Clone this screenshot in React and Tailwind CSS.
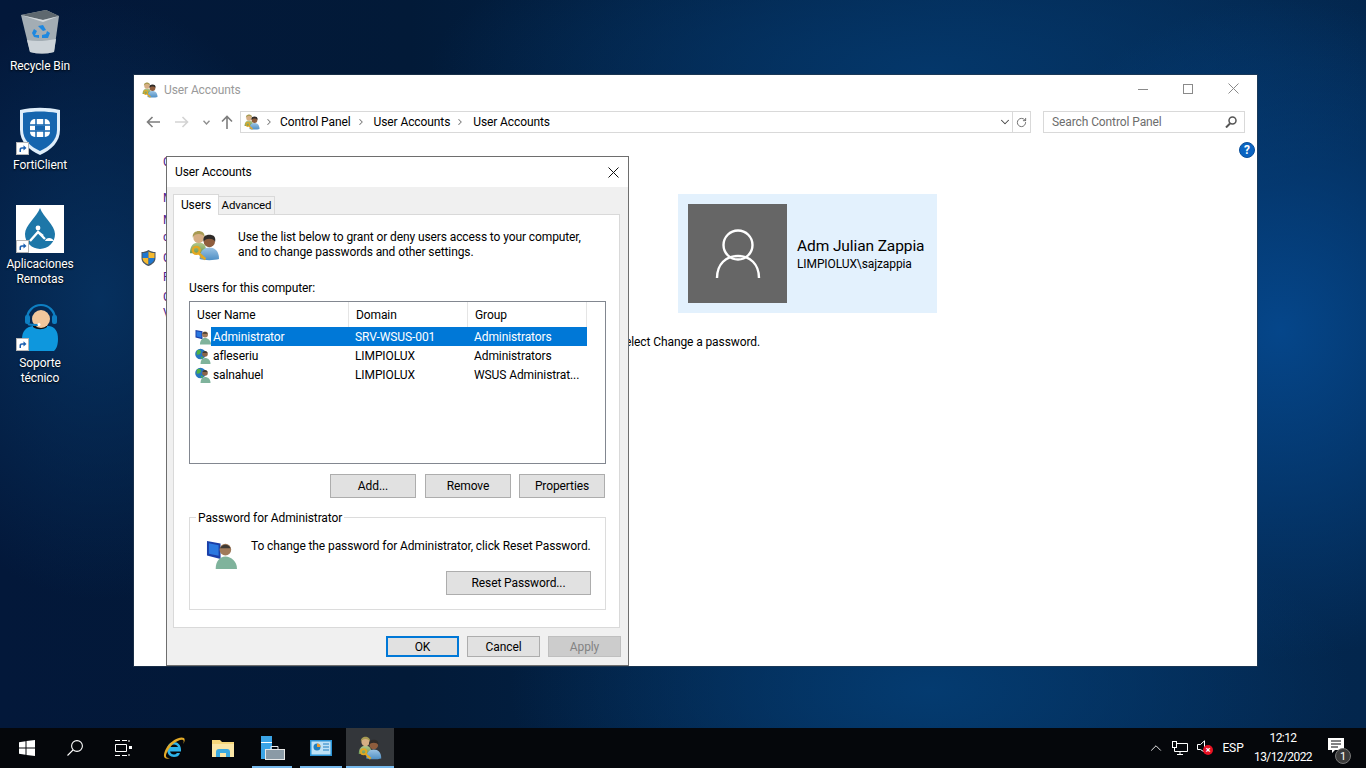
import React from "react";
import { ChevronDown, ChevronRight, ChevronUp, RotateCw } from "lucide-react";

const font = "font-['Roboto','Noto_Sans',sans-serif]";

const UsersIcon = ({ size = 16 }) => (
  <svg width={size} height={size} viewBox="0 0 32 32" className="shrink-0">
    <defs>
      <linearGradient id="shirtA" x1="0" y1="0" x2="0" y2="1">
        <stop offset="0" stopColor="#b4c88c" />
        <stop offset="1" stopColor="#6f9a58" />
      </linearGradient>
      <linearGradient id="shirtB" x1="0" y1="0" x2="0" y2="1">
        <stop offset="0" stopColor="#9cc4e4" />
        <stop offset="1" stopColor="#4f8fc4" />
      </linearGradient>
    </defs>
    <path d="M1 24c0-7 3-11 9-11s8 4 8 11z" fill="url(#shirtA)" />
    <circle cx="10" cy="8" r="5.500" fill="#d6ae84" />
    <path d="M4 8c-1-5 3-7 6-7s7 2 6 7c-1-3-3-4-6-4S5 5 4 8z" fill="#a79a52" />
    <path d="M11 30c0-8 4-12 10-12s10 4 10 12c-5 1.500-15 1.500-20 0z" fill="url(#shirtB)" />
    <circle cx="21" cy="12" r="5.800" fill="#8f5d3d" />
    <path d="M15 12c-1-5 2-7 6-7s7 2 6 7c-1-2-3-3-6-3s-5 1-6 3z" fill="#2f2b28" />
    <circle cx="7.500" cy="21" r="3.600" fill="none" stroke="#e3a822" strokeWidth="2.400" />
    <path d="M10 24l7 6M14 27l-1.500 2M16.500 29l-1.500 1.500" stroke="#e3a822" strokeWidth="2.400" />
  </svg>
);

const DomainUser = () => (
  <svg width="16" height="16" viewBox="0 0 16 16" className="shrink-0">
    <circle cx="5.500" cy="6" r="5.300" fill="#2676c0" />
    <path d="M2 2.500c2-1.500 4-.5 4 1.500S3.500 7 1.500 6.500zM5.500 8.500l3 .5-2 2.300z" fill="#4fb048" />
    <circle cx="10" cy="6" r="2.800" fill="#8b6548" />
    <path d="M7.500 5a2.600 2.600 0 0 1 5 0z" fill="#3e3a34" />
    <path d="M5.500 16c0-4 1.500-6 4.500-6s5.500 2 5.500 6z" fill="#7fb39c" />
  </svg>
);

const LocalUser = ({ size = 16 }) => (
  <svg width={size} height={size} viewBox="0 0 16 16" className="shrink-0">
    <path d="M.5 1l7 1.300v8L.5 8.500z" fill="#1a3fa8" />
    <path d="M1.500 2.200l5 1v5.500l-5-1.100z" fill="#2a78e0" />
    <circle cx="10" cy="5.500" r="3" fill="#a07a5a" />
    <path d="M7.300 4.800a2.900 2.900 0 0 1 5.400 0z" fill="#3e3a34" />
    <path d="M5 15.500c0-4 2-6.500 5-6.500s6 2.500 6 6.500z" fill="#7fb39c" />
  </svg>
);

const DialogButton = ({ className = "", children }) => (
  <div className={`flex items-center justify-center h-6 bg-[#e1e1e1] border border-[#adadad] text-[12px] text-black ${className}`}>
    {children}
  </div>
);

const ShortcutArrow = () => (
  <div className="absolute left-0 bottom-0 w-[13px] h-[13px] bg-white border border-[#b5b5b5] flex items-center justify-center">
    <svg width="9" height="9" viewBox="0 0 9 9">
      <path d="M1.500 8V5.500C1.500 4 2.500 3.200 4 3.200h1.500V1.200L8.500 4 5.500 6.600V4.800H4.300C3.300 4.800 3 5.400 3 6.200V8z" fill="#1b5fb0" />
    </svg>
  </div>
);

const DesktopIcon = ({ top, lines, labelClass = "mt-[3px]", children }) => (
  <div className="absolute left-0 w-[80px] flex flex-col items-center" style={{ top }}>
    <div className="relative w-12 h-12">{children}</div>
    <div className={`${labelClass} text-white text-[12px] leading-[15px] text-center [text-shadow:0_1px_2px_#000]`}>
      {lines.map((l) => (
        <div key={l}>{l}</div>
      ))}
    </div>
  </div>
);

const UserRow = ({ icon, name, domain, group, selected }) => (
  <div className="flex items-center h-[19px] pl-[5px]">
    {icon}
    <div className={`flex items-center h-[19px] w-[376px] ${selected ? "bg-[#0078d7] text-white" : "text-black"}`}>
      <div className="w-[144px] pl-[2px]">{name}</div>
      <div className="w-[119px]">{domain}</div>
      <div className="whitespace-nowrap">{group}</div>
    </div>
  </div>
);

const HeaderCell = ({ className = "", children }) => (
  <div className={`h-[25px] flex items-center border-r border-[#e5e5e5] pl-[7px] ${className}`}>{children}</div>
);

const TaskButton = ({ className = "", underline, children }) => (
  <div className={`relative flex items-center justify-center h-full ${className}`}>
    {children}
    {underline && <div className="absolute left-[4px] right-[4px] bottom-0 h-[2px] bg-[#76b9ed]" />}
  </div>
);

const hiddenLinks = [
  { top: 80, label: "C" },
  { top: 116, label: "M" },
  { top: 138, label: "M" },
  { top: 155, label: "c" },
  { top: 176, label: "C" },
  { top: 195, label: "P" },
  { top: 215, label: "C" },
  { top: 231, label: "V" },
];

const App = () => {
  return (
    <div className={`relative w-[1366px] h-[768px] overflow-hidden ${font} text-[12px] tracking-[-0.1px] bg-[radial-gradient(ellipse_300px_330px_at_1280px_330px,#05468a_0%,rgba(5,70,138,0)_100%),radial-gradient(ellipse_420px_200px_at_930px_690px,#043b70_0%,rgba(4,59,112,0)_100%),radial-gradient(ellipse_500px_160px_at_930px_70px,#04376a_0%,rgba(4,55,106,0)_100%),radial-gradient(ellipse_220px_300px_at_100px_300px,#06305e_0%,rgba(6,48,94,0)_100%),linear-gradient(90deg,#03183a_0%,#021a38_30%,#032a54_70%,#03264d_100%)]`}>
      {/* desktop icons */}
      <DesktopIcon top={8} lines={["Recycle Bin"]}>
        <svg width="48" height="48" viewBox="0 0 48 48">
          <path d="M5 7L30 2l13 6-5 36c-8 2-16 2-24 0z" fill="#a3adb4" />
          <path d="M5 7L30 2l13 6-16 4z" fill="#5e686f" />
          <path d="M5 7l22 5 16-4-16 6z" fill="#d5dadd" />
          <path d="M11 32c9 2 19 1 29-1l-2 13c-8 2-16 2-24 0z" fill="#ccd3d8" />
          <path d="M22 18l5-1 3 5-3 1zM16 25l2-4 3 2-2 4 4 0v3l-5-1zM26 30v-3l4-1 1-3 3 2-2 5z" fill="#1e88e0" />
        </svg>
      </DesktopIcon>
      <DesktopIcon top={107} lines={["FortiClient"]}>
        <svg width="48" height="48" viewBox="0 0 48 48">
          <path d="M4 3c13-3 27-3 40 0v20c0 12-9 20-20 25C13 43 4 35 4 23z" fill="#dfeefa" />
          <path d="M7 6c11-2 23-2 34 0v17c0 10-8 17-17 21C15 40 7 33 7 23z" fill="#1565ae" />
          <rect x="14" y="12" width="20" height="18" rx="5" fill="#fff" />
          <path d="M14 18h20M14 24h20M20 12v6M28 12v6M20 24v6M28 24v6" stroke="#1565ae" strokeWidth="1.500" />
          <rect x="19" y="18.500" width="10" height="5" fill="#1565ae" />
        </svg>
        <ShortcutArrow />
      </DesktopIcon>
      <DesktopIcon top={205} lines={["Aplicaciones", "Remotas"]} labelClass="mt-[4px]">
        <div className="w-12 h-12 bg-white">
          <svg width="48" height="48" viewBox="0 0 48 48">
            <path d="M24 3c3 9 15 17 15 26a15 15 0 0 1-30 0C9 20 21 12 24 3z" fill="#1d77a8" />
            <circle cx="22" cy="23" r="2.400" fill="#fff" />
            <path d="M14 36l8-9 7 7M22 27l5 4" stroke="#fff" strokeWidth="2.400" fill="none" />
            <path d="M29 36c1-4 7-4 9 0z" fill="#fff" />
          </svg>
        </div>
        <ShortcutArrow />
      </DesktopIcon>
      <DesktopIcon top={303} lines={["Soporte", "técnico"]} labelClass="mt-[5px]">
        <svg width="48" height="48" viewBox="0 0 48 48">
          <path d="M13 49C8 49 6 42 6 36c0-8 4-12 11-13h16c6 1 9 5 9 13 0 6-2 13-7 13z" fill="#0e97dd" />
          <path d="M17 24c4 3 10 3 14 0v-2H17z" fill="#111" />
          <circle cx="25" cy="16" r="9" fill="#f2c79c" />
          <path d="M11 16a14 14 0 0 1 28 0" fill="none" stroke="#0e7fc2" strokeWidth="2.200" />
          <rect x="9" y="12" width="5" height="9" rx="2" fill="#0e7fc2" />
          <rect x="36" y="12" width="5" height="9" rx="2" fill="#0e7fc2" />
          <path d="M12 21c2 1 6 1 10 1" fill="none" stroke="#0e7fc2" strokeWidth="2" />
          <circle cx="23" cy="21.500" r="1.500" fill="#fff" />
        </svg>
        <ShortcutArrow />
      </DesktopIcon>

      {/* control panel window */}
      <div className="absolute left-[134px] top-[75px] w-[1123px] h-[591px] bg-white shadow-[0_0_0_1px_rgba(40,60,80,0.6)]">
        <div className="flex items-center h-[30px] pl-[8px]">
          <UsersIcon />
          <span className="ml-[6px] text-[#9a9a9a]">User Accounts</span>
          <div className="absolute right-[18px] top-[8px] flex items-center gap-[35px]">
            <svg width="10" height="10" viewBox="0 0 10 10" stroke="#8a8a8a" fill="none"><path d="M0 5.500h10" /></svg>
            <svg width="10" height="10" viewBox="0 0 10 10" stroke="#8a8a8a" fill="none"><rect x=".5" y=".5" width="9" height="9" /></svg>
            <svg width="11" height="11" viewBox="0 0 11 11" stroke="#8a8a8a" fill="none"><path d="M.5.500l10 10M10.500.5l-10 10" /></svg>
          </div>
        </div>
        <div className="flex items-center h-[22px] mt-[6px]">
          <svg width="14" height="12" viewBox="0 0 14 12" fill="none" stroke="#7d7d7d" strokeWidth="1.600" className="ml-[12px]"><path d="M14 6H1.500M6.500 1L1.500 6l5 5" /></svg>
          <svg width="14" height="12" viewBox="0 0 14 12" fill="none" stroke="#d3d3d3" strokeWidth="1.600" className="ml-[15px]"><path d="M0 6h12.500M7.500 1l5 5-5 5" /></svg>
          <svg width="7" height="5" viewBox="0 0 7 5" fill="none" stroke="#8f8f8f" strokeWidth="1.400" className="ml-[14px]"><path d="M.5.800L3.500 4l3-3.200" /></svg>
          <svg width="12" height="14" viewBox="0 0 12 14" fill="none" stroke="#7d7d7d" strokeWidth="1.600" className="ml-[11px]"><path d="M6 14V1.500M1 6.500l5-5 5 5" /></svg>
          <div className="ml-[7px] flex items-center w-[791px] h-[22px] border border-[#d9d9d9]">
            <div className="ml-[3px]"><UsersIcon /></div>
            <ChevronRight size={10} strokeWidth={2.500} className="ml-[4px] text-[#777]" />
            <span className="ml-[6px]">Control Panel</span>
            <ChevronRight size={10} strokeWidth={2.500} className="ml-[5px] text-[#777]" />
            <span className="ml-[8px]">User Accounts</span>
            <ChevronRight size={10} strokeWidth={2.500} className="ml-[5px] text-[#777]" />
            <span className="ml-[8px]">User Accounts</span>
            <ChevronDown size={14} strokeWidth={1.800} className="ml-auto mr-[-1px] text-[#444]" />
            <div className="flex items-center justify-center w-[18px] h-full border-l border-[#d9d9d9] ml-[1px]">
              <RotateCw size={11} strokeWidth={2} className="text-[#666]" />
            </div>
          </div>
          <div className="ml-[12px] flex items-center w-[202px] h-[22px] border border-[#d9d9d9] pl-[8px] text-[#6d6d6d]">
            Search Control Panel
            <svg width="12" height="12" viewBox="0 0 12 12" fill="none" stroke="#555" className="ml-auto mr-[7px]">
              <circle cx="7.500" cy="4.500" r="3.500" strokeWidth="1.500" />
              <path d="M5 7.500L1 11.500" strokeWidth="2" />
            </svg>
          </div>
        </div>
        {/* help */}
        <div className="absolute left-[1105px] top-[67px] w-4 h-4 rounded-full bg-[#0a64c2] border border-[#0a4f9a] flex items-center justify-center text-white text-[12px] font-bold leading-none">?</div>
        {/* links cut off behind the dialog */}
        {hiddenLinks.map((link) => (
          <div key={link.top} className="absolute left-[29px] leading-[15px] text-[#4b1a8b]" style={{ top: link.top }}>
            {link.label}
          </div>
        ))}
        <div className="absolute left-[7px] top-[175px]">
          <svg width="15" height="16" viewBox="0 0 15 16">
            <path d="M7.500 0C10 1.500 12 2 14.500 2v6c0 4-3 6.500-7 8-4-1.500-7-4-7-8V2C3 2 5 1.500 7.500 0z" fill="#4a5560" />
            <path d="M7.500 1.500V8H1.500V3c2.500 0 4-.5 6-1.500z" fill="#1f78d1" />
            <path d="M7.500 1.500c2 1 3.500 1.500 6 1.500v5h-6z" fill="#f5b92f" />
            <path d="M1.500 8h6v6.500C4 13.500 1.700 11 1.500 8z" fill="#f5b92f" />
            <path d="M7.500 8h6c-.2 3-2.500 5.500-6 6.500z" fill="#1f78d1" />
          </svg>
        </div>
        {/* user card */}
        <div className="absolute left-[544px] top-[119px] flex items-center w-[259px] h-[119px] bg-[#e3f1fd] pl-[10px]">
          <div className="flex items-center justify-center w-[99px] h-[99px] bg-[#666666]">
            <svg width="46" height="50" viewBox="0 0 46 50" fill="none" stroke="#fff" strokeWidth="2.400">
              <circle cx="23" cy="16" r="14.500" />
              <path d="M2 49c0-14 9-22 21-22s21 8 21 22" />
            </svg>
          </div>
          <div className="ml-[10px]">
            <div className="text-[15.5px] leading-[21px] text-black">Adm Julian Zappia</div>
            <div className="text-[12px] leading-[15px] text-black">LIMPIOLUX\sajzappia</div>
          </div>
        </div>
        <div className="absolute left-[491px] top-[258px] text-black">elect Change a password.</div>
      </div>

      {/* dialog */}
      <div className="absolute left-[166px] top-[156px] w-[463px] h-[510px] bg-[#f0f0f0] border border-[#6e6e6e] flex flex-col">
        <div className="flex items-center h-[30px] bg-white pl-[8px] text-black">
          User Accounts
          <svg width="11" height="11" viewBox="0 0 11 11" stroke="#111" fill="none" className="ml-auto mr-[9px]"><path d="M.5.500l10 10M10.500.5l-10 10" /></svg>
        </div>
        <div className="flex items-end h-[27px] pl-[6px]">
          <div className="flex items-center justify-center w-[46px] h-[21px] bg-white border border-b-0 border-[#d9d9d9] relative top-[1px] z-10">Users</div>
          <div className="flex items-center justify-center w-[56px] h-[18px] bg-[#f0f0f0] border border-l-0 border-b-0 border-[#d9d9d9] text-[11.5px]">Advanced</div>
        </div>
        <div className="ml-[6px] w-[447px] h-[414px] bg-white border border-[#d9d9d9] pl-[15px]">
          <div className="flex pt-[15px] h-[66px]">
            <UsersIcon size={31} />
            <div className="ml-[18px] leading-[15px] text-black whitespace-nowrap">
              <div>Use the list below to grant or deny users access to your computer,</div>
              <div>and to change passwords and other settings.</div>
            </div>
          </div>
          <div className="text-black leading-[15px]">Users for this computer:</div>
          <div className="mt-[5px] w-[417px] h-[163px] border border-[#828790] bg-white">
            <div className="flex text-black">
              <HeaderCell className="w-[159px]">User Name</HeaderCell>
              <HeaderCell className="w-[119px]">Domain</HeaderCell>
              <HeaderCell className="w-[119px]">Group</HeaderCell>
            </div>
            <UserRow icon={<LocalUser />} name="Administrator" domain="SRV-WSUS-001" group="Administrators" selected />
            <UserRow icon={<DomainUser />} name="afleseriu" domain="LIMPIOLUX" group="Administrators" />
            <UserRow icon={<DomainUser />} name="salnahuel" domain="LIMPIOLUX" group="WSUS Administrat..." />
          </div>
          <div className="flex mt-[10px] pl-[141px]">
            <DialogButton className="w-[86px]">Add...</DialogButton>
            <DialogButton className="w-[86px] ml-[9px]">Remove</DialogButton>
            <DialogButton className="w-[86px] ml-[8px]">Properties</DialogButton>
          </div>
          <div className="relative mt-[19px] w-[417px] h-[93px] border border-[#dcdcdc]">
            <div className="absolute left-[6px] -top-[7px] bg-white px-[2px] leading-[15px] text-black">Password for Administrator</div>
            <div className="flex pt-[21px] pl-[16px]">
              <LocalUser size={31} />
              <div className="ml-[14px] leading-[15px] text-black whitespace-nowrap">To change the password for Administrator, click Reset Password.</div>
            </div>
            <DialogButton className="absolute left-[256px] top-[53px] w-[145px]">Reset Password...</DialogButton>
          </div>
        </div>
        <div className="flex mt-[8px] pl-[219px]">
          <div className="flex items-center justify-center w-[73px] h-[21px] bg-[#e1e1e1] border-2 border-[#0078d7] text-black">OK</div>
          <div className="flex items-center justify-center w-[73px] h-[21px] ml-[8px] bg-[#e1e1e1] border border-[#adadad] text-black">Cancel</div>
          <div className="flex items-center justify-center w-[73px] h-[21px] ml-[8px] bg-[#cccccc] border border-[#bfbfbf] text-[#838383]">Apply</div>
        </div>
      </div>

      {/* taskbar */}
      <div className="absolute left-0 right-0 bottom-0 flex items-center h-[40px] bg-[#05070b] text-white">
        <TaskButton className="w-[54px]">
          <svg width="16" height="16" viewBox="0 0 16 16" fill="#fff">
            <path d="M0 2.300L6.500 1.300V7.600H0zM7.500 1.100L16 0V7.600H7.500zM0 8.500H6.500V14.700L0 13.700zM7.500 8.500H16V16L7.500 14.900z" />
          </svg>
        </TaskButton>
        <TaskButton className="w-[42px]">
          <svg width="16" height="16" viewBox="0 0 16 16" fill="none" stroke="#fff" strokeWidth="1.100">
            <circle cx="10" cy="6" r="5.400" />
            <path d="M6 10L.5 15.500" />
          </svg>
        </TaskButton>
        <TaskButton className="w-[54px]">
          <svg width="17" height="16" viewBox="0 0 17 16" fill="none" stroke="#fff" strokeWidth="1">
            <path d="M0 .5h5M7 .5h5M0 15.500h5M7 15.500h5M.5 4.500h11v7H.5zM14 0v2M14 14v2" />
            <rect x="14" y="6" width="3" height="3" fill="#fff" stroke="none" />
          </svg>
        </TaskButton>
        <TaskButton className="w-[48px]">
          <svg width="24" height="24" viewBox="0 0 24 24">
            <path d="M12 6a7 7 0 0 0-7 7c0 5 3 8 7 8 3 0 5-1 6-4h-3c-1 1-2 1.500-3 1.500-2 0-3.500-1-4-3h11v-2c0-4-3-7.500-7-7.500zM8 11c.3-1.500 2-2.500 4-2.500s3.500 1 4 2.500z" fill="#2eb4ea" />
            <path d="M22 2c-4-2-12 2-17 9C2 16 1 20 3 22c1 1 3 1 5 0-2 0-4 0-4-2 0-3 3-8 7-12 4-3 8-5 10-4 1 .5 1 2 0 4 2-2 2-5 1-6z" fill="#e2a928" />
          </svg>
        </TaskButton>
        <TaskButton className="w-[50px]">
          <svg width="22" height="19" viewBox="0 0 22 19">
            <path d="M0 1h8l2 2h12v15H0z" fill="#f6d67a" />
            <path d="M0 5h22v13H0z" fill="#fbe6a6" />
            <path d="M4 18v-5c0-2 1-3 3-3h8c2 0 3 1 3 3v5h-4v-4H8v4z" fill="#3ba9e0" />
          </svg>
        </TaskButton>
        <TaskButton className="w-[48px]" underline>
          <svg width="25" height="25" viewBox="0 0 25 25">
            <rect x="1" y="0" width="11" height="23" fill="#3ba4e6" />
            <rect x="1" y="6" width="11" height="1" fill="#fff" />
            <rect x="5.500" y="13.500" width="19" height="10" fill="#8a9aa6" stroke="#e8e8e8" />
            <path d="M11 13v-2.500h7V13" fill="none" stroke="#e8e8e8" />
          </svg>
        </TaskButton>
        <TaskButton className="w-[50px]" underline>
          <svg width="22" height="16" viewBox="0 0 22 16">
            <rect width="22" height="16" fill="#2a93d5" />
            <rect x="1.500" y="1.500" width="19" height="13" fill="#bfe2f6" />
            <circle cx="7" cy="7" r="3.500" fill="#1f7fc0" />
            <path d="M7 3.500V7h3.500A3.500 3.500 0 0 0 7 3.500z" fill="#f09a2a" />
            <path d="M13 4h6M13 7h6M13 10h6" stroke="#1f7fc0" />
          </svg>
        </TaskButton>
        <div className="relative flex items-center justify-center w-[48px] h-full bg-[#33363a]">
          <UsersIcon size={24} />
          <div className="absolute left-0 right-0 bottom-0 h-[2px] bg-[#76b9ed]" />
        </div>

        <div className="ml-auto flex items-center h-full">
          <ChevronUp size={18} strokeWidth={1.200} className="mr-[7px]" />
          <svg width="16" height="15" viewBox="0 0 16 15" fill="none" stroke="#fff" className="mr-[9px]">
            <path d="M4.500 2.500H15.500V10.500H2.500V7M5 13.500h6M8 10.500v3" />
            <rect x=".5" y=".5" width="4" height="6" />
          </svg>
          <div className="relative w-[16px] h-[16px] mr-[7px]">
            <svg width="10" height="14" viewBox="0 0 10 14" fill="none" stroke="#fff"><path d="M.5 4.500h3L7.500.8v11.400L3.500 9.500h-3z" /></svg>
            <div className="absolute left-[6px] top-[5px] w-[10px] h-[10px] rounded-full bg-[#e81123] text-white text-[9px] leading-[10px] text-center font-bold">×</div>
          </div>
          <div className="w-[26px] text-center text-[12px]">ESP</div>
          <div className="w-[60px] ml-[7px] text-center text-[12px] leading-[19px] tracking-[-0.6px]">
            <div>12:12</div>
            <div>13/12/2022</div>
          </div>
          <div className="relative w-[53px] h-full flex items-center justify-center">
            <svg width="16" height="16" viewBox="0 0 16 16" className="relative -left-[4px] -top-[2px]">
              <path d="M0 0h16v12H7l-3 3v-3H0z" fill="#fff" />
              <path d="M3 3h10M3 6h10M3 9h7" stroke="#05070b" />
            </svg>
            <div className="absolute left-[22px] top-[20px] w-[16px] h-[16px] rounded-full bg-[#3a3a3a] border border-[#777] flex items-center justify-center text-[11px] leading-none text-white">1</div>
          </div>
        </div>
      </div>
    </div>
  );
};

export default App;
